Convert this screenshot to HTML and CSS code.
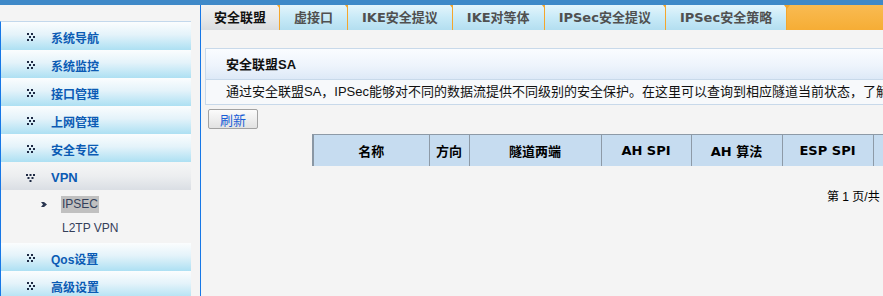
FILE: index.html
```html
<!DOCTYPE html>
<html lang="zh-CN">
  <head>
    <meta charset="UTF-8" />
    <meta name="viewport" content="width=device-width, initial-scale=1.0" />
    <title>安全联盟</title>
    <link rel="stylesheet" href="styles.css">
  </head>
  <body>
    <div class="topbar"></div>
    <div class="layout">
      <aside class="sidebar">
        <ul class="menu">
          <li class="menu-item">
            <svg class="ico" width="9" height="9" viewBox="0 0 9 9"><g fill="#1e2a44"><rect x="1" y="0" width="2" height="2"/><rect x="5" y="0" width="2" height="2"/><rect x="3" y="3" width="2" height="2"/><rect x="7" y="3" width="2" height="2"/><rect x="1" y="6" width="2" height="2"/><rect x="5" y="6" width="2" height="2"/></g></svg>
            系统导航
          </li>
          <li class="menu-item">
            <svg class="ico" width="9" height="9" viewBox="0 0 9 9"><g fill="#1e2a44"><rect x="1" y="0" width="2" height="2"/><rect x="5" y="0" width="2" height="2"/><rect x="3" y="3" width="2" height="2"/><rect x="7" y="3" width="2" height="2"/><rect x="1" y="6" width="2" height="2"/><rect x="5" y="6" width="2" height="2"/></g></svg>
            系统监控
          </li>
          <li class="menu-item">
            <svg class="ico" width="9" height="9" viewBox="0 0 9 9"><g fill="#1e2a44"><rect x="1" y="0" width="2" height="2"/><rect x="5" y="0" width="2" height="2"/><rect x="3" y="3" width="2" height="2"/><rect x="7" y="3" width="2" height="2"/><rect x="1" y="6" width="2" height="2"/><rect x="5" y="6" width="2" height="2"/></g></svg>
            接口管理
          </li>
          <li class="menu-item">
            <svg class="ico" width="9" height="9" viewBox="0 0 9 9"><g fill="#1e2a44"><rect x="1" y="0" width="2" height="2"/><rect x="5" y="0" width="2" height="2"/><rect x="3" y="3" width="2" height="2"/><rect x="7" y="3" width="2" height="2"/><rect x="1" y="6" width="2" height="2"/><rect x="5" y="6" width="2" height="2"/></g></svg>
            上网管理
          </li>
          <li class="menu-item">
            <svg class="ico" width="9" height="9" viewBox="0 0 9 9"><g fill="#1e2a44"><rect x="1" y="0" width="2" height="2"/><rect x="5" y="0" width="2" height="2"/><rect x="3" y="3" width="2" height="2"/><rect x="7" y="3" width="2" height="2"/><rect x="1" y="6" width="2" height="2"/><rect x="5" y="6" width="2" height="2"/></g></svg>
            安全专区
          </li>
          <li class="menu-item open">
            <svg class="ico" width="9" height="9" viewBox="0 0 9 9"><g fill="#1e2a44"><rect x="0" y="1" width="2" height="2"/><rect x="3.5" y="1" width="2" height="2"/><rect x="7" y="1" width="2" height="2"/><rect x="1.5" y="4" width="2" height="2"/><rect x="5.5" y="4" width="2" height="2"/><rect x="3.5" y="7" width="2" height="2"/></g></svg>
            VPN
          </li>
          <li class="submenu">
            <div class="sub-item">
              <svg class="arrow" width="6" height="5" viewBox="0 0 6 5"><polygon points="0,0 3,0 6,2.5 3,5 0,5 2,2.5" fill="#2a3650"/></svg>
              <span class="sub-text current">IPSEC</span>
            </div>
            <div class="sub-item">
              <span class="sub-text">L2TP VPN</span>
            </div>
          </li>
          <li class="menu-item">
            <svg class="ico" width="9" height="9" viewBox="0 0 9 9"><g fill="#1e2a44"><rect x="1" y="0" width="2" height="2"/><rect x="5" y="0" width="2" height="2"/><rect x="3" y="3" width="2" height="2"/><rect x="7" y="3" width="2" height="2"/><rect x="1" y="6" width="2" height="2"/><rect x="5" y="6" width="2" height="2"/></g></svg>
            Qos设置
          </li>
          <li class="menu-item">
            <svg class="ico" width="9" height="9" viewBox="0 0 9 9"><g fill="#1e2a44"><rect x="1" y="0" width="2" height="2"/><rect x="5" y="0" width="2" height="2"/><rect x="3" y="3" width="2" height="2"/><rect x="7" y="3" width="2" height="2"/><rect x="1" y="6" width="2" height="2"/><rect x="5" y="6" width="2" height="2"/></g></svg>
            高级设置
          </li>
        </ul>
      </aside>

      <main class="main">
        <div class="tabs">
          <div class="tab active">安全联盟</div>
          <div class="tab">虚接口</div>
          <div class="tab">IKE安全提议</div>
          <div class="tab">IKE对等体</div>
          <div class="tab">IPSec安全提议</div>
          <div class="tab">IPSec安全策略</div>
        </div>

        <div class="content">
          <div class="panel">
            <div class="panel-title">安全联盟SA</div>
            <div class="panel-desc">通过安全联盟SA，IPSec能够对不同的数据流提供不同级别的安全保护。在这里可以查询到相应隧道当前状态，了解隧道的运行情况。</div>
          </div>

          <button class="btn">刷新</button>

          <table class="sa-table">
            <thead>
              <tr>
                <th class="c-name">名称</th>
                <th class="c-dir">方向</th>
                <th class="c-ends">隧道两端</th>
                <th class="c-ah">AH SPI</th>
                <th class="c-ahalg">AH 算法</th>
                <th class="c-esp">ESP SPI</th>
                <th class="c-espalg">ESP 算法</th>
              </tr>
            </thead>
            <tbody id="saItems"></tbody>
          </table>

          <div class="pager">第 1 页/共 1 页</div>
        </div>
      </main>
    </div>
  </body>
</html>
```

FILE: styles.css
```css
* {
  box-sizing: border-box;
}

html,
body {
  margin: 0;
  height: 100%;
  overflow: hidden;
}

body {
  background: #f4f4f4;
  font-family: "Liberation Sans", "Noto Sans CJK SC", sans-serif;
  font-size: 12px;
  color: #000;
}

.topbar {
  height: 5px;
  background: #3f89c8;
}

.layout {
  display: flex;
  height: 291px;
}

/* left menu */
.sidebar {
  width: 200px;
  flex-shrink: 0;
  padding-top: 16px;
}

.menu {
  list-style: none;
  margin: 0;
  padding: 0;
  width: 191px;
  height: 100%;
  border-left: 1px solid #1677e6;
  border-top: 1px solid #c3d8ec;
}

.menu-item {
  display: flex;
  align-items: center;
  height: 28px;
  padding: 2px 0 0 25px;
  background: linear-gradient(#fbfdfe, #e4f3fa 45%, #ade0f3);
  color: #0b5bb4;
  font-weight: bold;
  font-size: 12px;
}

.menu-item .ico {
  margin-right: 16px;
}

.menu-item.open {
  background: linear-gradient(#f6f6f6, #eceef0 50%, #dadee4);
  font-size: 13px;
}

.submenu {
  padding: 2px 0 3px 40px;
}

.sub-item {
  display: flex;
  align-items: center;
  height: 24px;
  padding-left: 20px;
}

.sub-item .arrow {
  margin-left: -20px;
  margin-right: 14px;
}

.sub-text {
  display: inline-block;
  line-height: 17px;
  padding: 0 1px;
  color: #34405a;
  font-size: 12px;
}

.sub-text.current {
  background: #c0c0c0;
}

/* main area */
.main {
  flex: 1;
  min-width: 0;
  border-left: 1px solid #1677e6;
  overflow: hidden;
}

.tabs {
  display: flex;
  height: 25px;
  background: linear-gradient(#f9bb52, #f6ad35);
}

.tab {
  position: relative;
  height: 25px;
  line-height: 25px;
  padding: 0 14px;
  background: linear-gradient(#e4f5fc, #c8eaf7 50%, #b3def0);
  border-right: 1px solid #f4a62c;
  color: #505050;
  font-family: "DejaVu Sans", "Noto Sans CJK SC", sans-serif;
  font-weight: bold;
  font-size: 13px;
  white-space: nowrap;
}

.tab:after {
  content: "";
  position: absolute;
  top: 0;
  right: -4px;
  border-left: 3px solid transparent;
  border-right: 3px solid transparent;
  border-top: 4px solid #f4a62c;
}

.tab.active {
  padding: 0 13px;
  background: linear-gradient(#f2f2f2, #e6e7e8 60%, #d9dcdf);
  color: #111;
}

.content {
  width: 1000px;
}

.panel {
  margin: 18px 0 0 4px;
  border: 1px solid #c8d9ea;
  border-right: none;
}

.panel-title {
  height: 31px;
  line-height: 31px;
  padding-left: 20px;
  background: linear-gradient(#fafcff, #eef4fc 55%, #dde9f7);
  border-bottom: 1px solid #c8d9ea;
  font-weight: bold;
  font-size: 13px;
  color: #111;
}

.panel-desc {
  height: 24px;
  line-height: 24px;
  padding-left: 20px;
  background: #f7f9fb;
  font-size: 13px;
  color: #111;
  white-space: nowrap;
  overflow: hidden;
}

.btn {
  display: block;
  margin: 4px 0 0 7px;
  width: 50px;
  height: 20px;
  padding: 0;
  border: 1px solid #a2a2a2;
  border-radius: 2px;
  background: linear-gradient(#fbfbfb, #e2e2e2);
  color: #1a5ed6;
  font-family: "Liberation Sans", "Noto Sans CJK SC", sans-serif;
  font-size: 13px;
}

.sa-table {
  margin: 5px 0 0 111px;
  border-collapse: collapse;
  table-layout: fixed;
}

.sa-table th {
  height: 31px;
  padding: 0;
  background: #c6dcf0;
  border: 1px solid #8d9aa7;
  border-bottom: none;
  font-family: "DejaVu Sans", "Noto Sans CJK SC", sans-serif;
  font-size: 13px;
  font-weight: bold;
  text-align: center;
  white-space: nowrap;
}

.sa-table th:first-child {
  border-left: 2px solid #8a97a4;
}

.c-name { width: 116px; }
.c-dir { width: 40px; }
.c-ends { width: 132px; }
.c-ah { width: 90px; }
.c-ahalg { width: 91px; }
.c-esp { width: 91px; }
.c-espalg { width: 100px; }

.pager {
  margin: 21px 0 0 626px;
  font-size: 12px;
}
```
